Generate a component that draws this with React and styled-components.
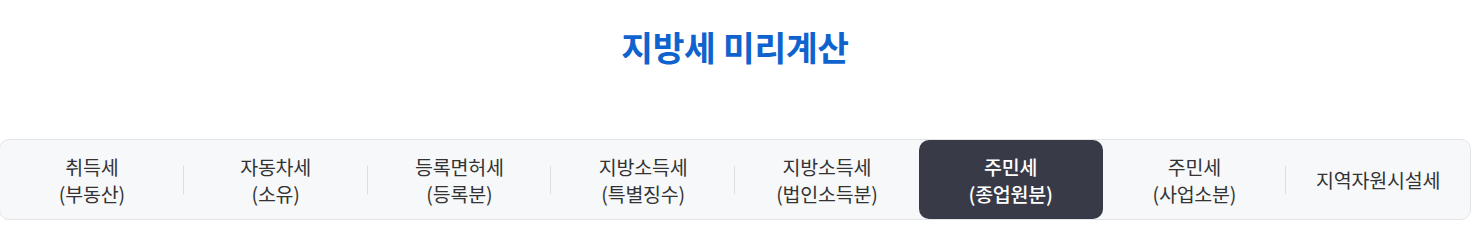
import React, { useState } from 'react';
import styled, { createGlobalStyle } from 'styled-components';

const GlobalStyle = createGlobalStyle`
  html, body {
    margin: 0;
    padding: 0;
    background: #ffffff;
    overflow: hidden;
  }
  body {
    font-family: "Noto Sans CJK KR", "Noto Sans", sans-serif;
  }
`;

const tabs = [
  ['취득세', '(부동산)'],
  ['자동차세', '(소유)'],
  ['등록면허세', '(등록분)'],
  ['지방소득세', '(특별징수)'],
  ['지방소득세', '(법인소득분)'],
  ['주민세', '(종업원분)'],
  ['주민세', '(사업소분)'],
  ['지역자원시설세'],
];

const Page = styled.div`
  width: 1472px;
  margin-left: -1px;
  padding-top: 22px;
`;

const Title = styled.h2`
  margin: 0;
  height: 48px;
  text-align: center;
  font-size: 34.5px;
  line-height: 48px;
  font-weight: 700;
  color: #0f63cf;
  letter-spacing: -0.3px;
`;

const TabBar = styled.div`
  margin-top: 69px;
  display: grid;
  grid-template-columns: repeat(8, 1fr);
  height: 79px;
  background: #f7f8fa;
  border: 1px solid #e2e4e8;
  border-radius: 10px;
`;

const Tab = styled.button`
  position: relative;
  display: flex;
  flex-direction: column;
  align-items: center;
  justify-content: center;
  border: 0;
  margin: 0;
  padding: 0;
  border-radius: 10px;
  font-family: inherit;
  font-size: 19.5px;
  line-height: 27px;
  letter-spacing: -0.2px;
  cursor: pointer;
  background: ${(p) => (p.$active ? '#383a48' : 'transparent')};
  color: ${(p) => (p.$active ? '#ffffff' : '#333333')};
  font-weight: ${(p) => (p.$active ? 500 : 400)};

  &::after {
    content: '';
    position: absolute;
    right: 0;
    top: 50%;
    width: 1px;
    height: 28px;
    margin-top: -14px;
    background: #dcdee2;
    display: ${(p) => (p.$divider ? 'block' : 'none')};
  }
`;

export default function App() {
  const [active, setActive] = useState(5);
  return (
    <>
      <GlobalStyle />
      <Page>
        <Title>지방세 미리계산</Title>
        <TabBar>
          {tabs.map((lines, i) => (
            <Tab
              key={i}
              $active={i === active}
              $divider={i < tabs.length - 1 && i !== active && i + 1 !== active}
              onClick={() => setActive(i)}
            >
              {lines.map((l) => (
                <span key={l}>{l}</span>
              ))}
            </Tab>
          ))}
        </TabBar>
      </Page>
    </>
  );
}
